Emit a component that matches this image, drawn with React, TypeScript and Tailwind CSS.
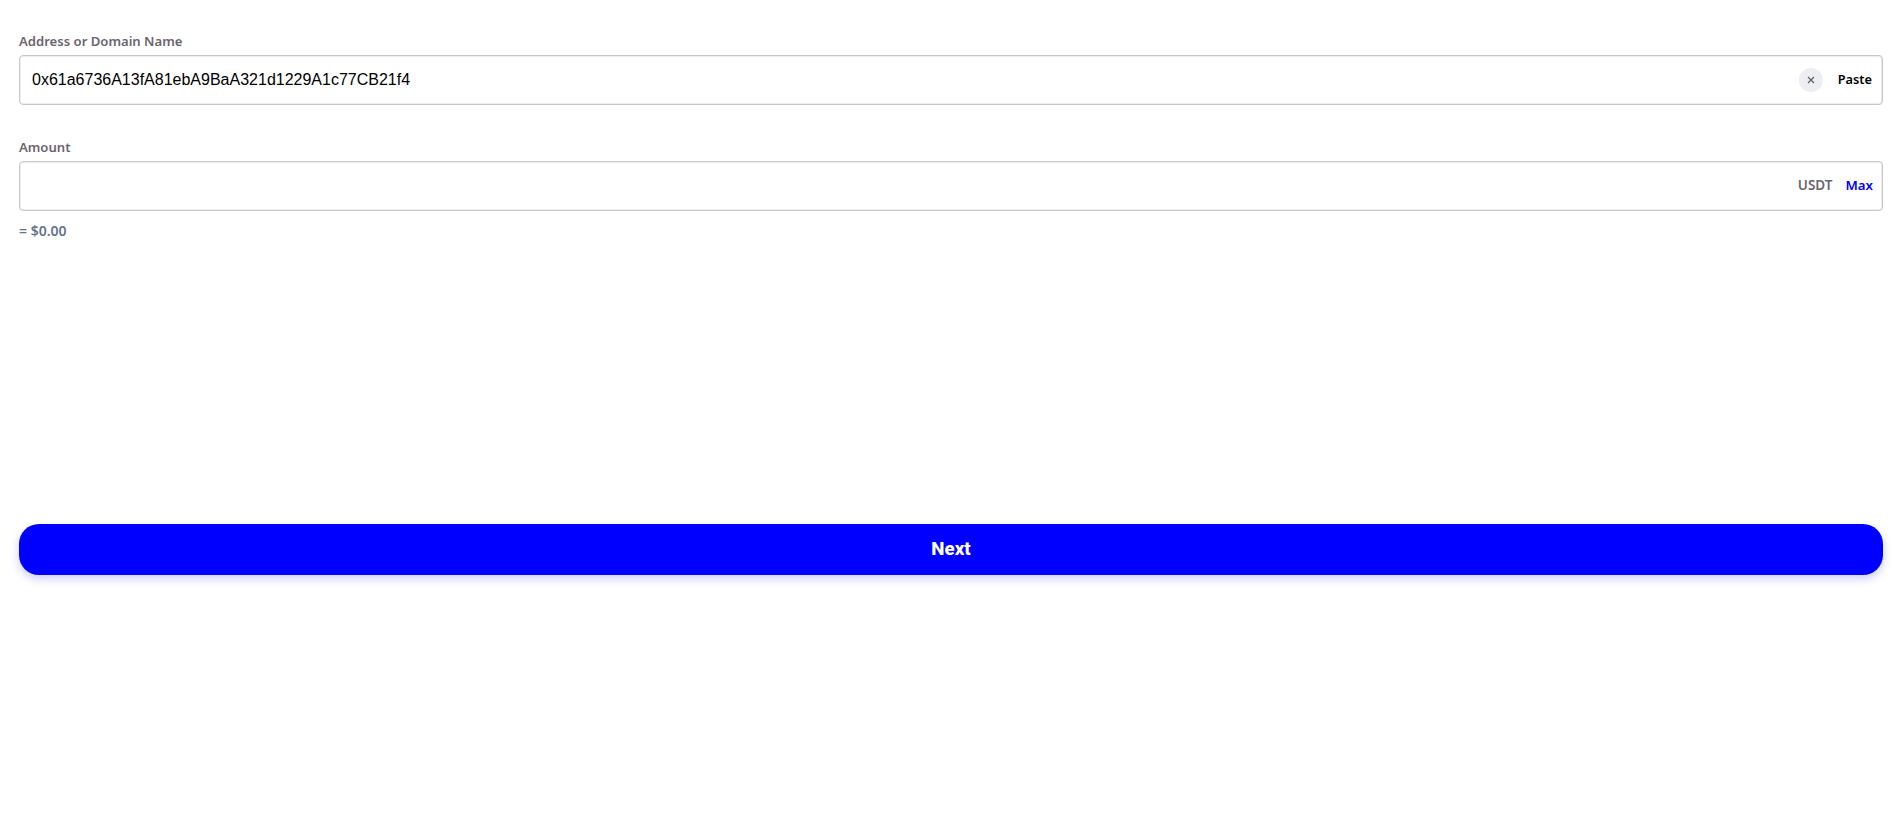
export default function App() {
  const ui = "font-['Noto_Sans',sans-serif]";
  return (
    <div className={`min-h-[818px] bg-white px-[19px] pt-[31px] ${ui}`}>
      <label className="block text-[13.1px] leading-[20px] font-semibold text-[#6b6570]">Address or Domain Name</label>
      <div className="mt-[4px] flex h-[50px] items-center rounded-[4px] border border-[#c8c8ca] shadow-[inset_0_0_0_1px_#ececee] pl-[12px] pr-[10px]">
        <span className="flex-1 font-['Liberation_Sans',sans-serif] text-[16px] text-black">0x61a6736A13fA81ebA9BaA321d1229A1c77CB21f4</span>
        <span className="flex h-[24px] w-[24px] items-center justify-center rounded-full bg-[#edeef2]">
          <svg width="8" height="8" viewBox="0 0 8 8" fill="none" stroke="#5f5a63" strokeWidth="1.2"><path d="M1 1l6 6M7 1L1 7" /></svg>
        </span>
        <span className="ml-[15px] pb-[1px] text-[12.75px] font-semibold text-black">Paste</span>
      </div>
      <label className="mt-[32px] block text-[13.1px] leading-[20px] font-semibold text-[#6b6570]">Amount</label>
      <div className="mt-[4px] flex h-[50px] items-center justify-end rounded-[4px] border border-[#c8c8ca] shadow-[inset_0_0_0_1px_#ececee] pb-[1px] pr-[9px]">
        <span className="text-[13.5px] font-semibold text-[#6b6570]">USDT</span>
        <span className="ml-[13px] text-[13.25px] font-semibold text-[#0000ff]">Max</span>
      </div>
      <p className="mt-[10px] text-[14px] leading-[20px] font-semibold text-[#64748b]">= $0.00</p>
      <button className="mt-[283px] flex h-[51px] w-full items-center justify-center rounded-[20px] bg-[#0000ff] font-['Roboto',sans-serif] text-[18.75px] leading-[22px] font-extrabold text-white shadow-[0_4px_10px_rgba(0,0,255,0.2)]"><span className="-translate-y-px">Next</span></button>
    </div>
  );
}
